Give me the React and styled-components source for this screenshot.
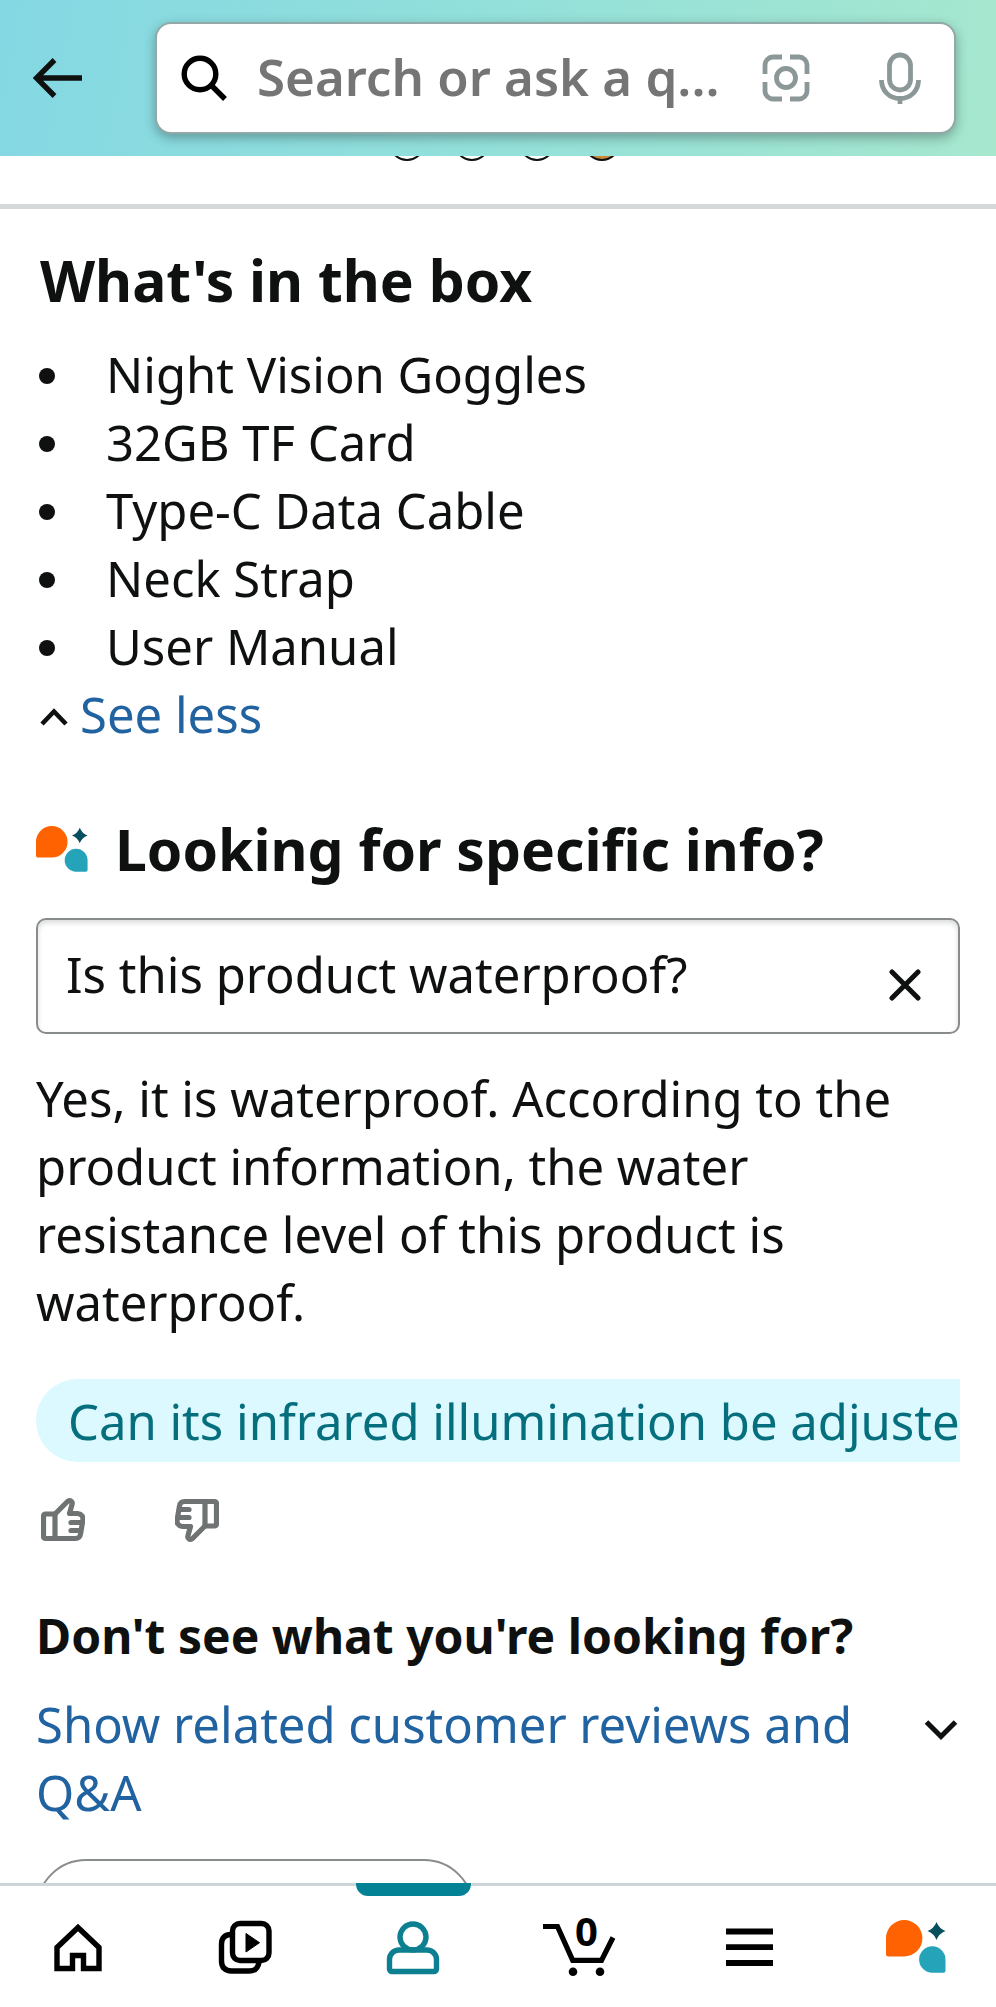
import styled, { createGlobalStyle } from "styled-components";

const boxItems = [
  "Night Vision Goggles",
  "32GB TF Card",
  "Type-C Data Cable",
  "Neck Strap",
  "User Manual",
];

const AssistantLogo = (props) => (
  <svg viewBox="7 10 60 53" aria-hidden="true" {...props}>
    <path
      d="M7 28.2a18.2 18.2 0 1 1 18.2 18.2H9.5a2.5 2.5 0 0 1-2.5-2.5z"
      fill="#ff6200"
    />
    <path
      d="M66.5 49.5a13.2 13.2 0 1 0-13.2 13.2H64.5a2 2 0 0 0 2-2z"
      fill="#25a3b9"
    />
    <path
      d="M57.5 12q2.5 6.500 9 9q-6.500 2.500-9 9q-2.500-6.500-9-9q6.500-2.500 9-9z"
      fill="#064f5f"
    />
  </svg>
);

const ThumbIcon = () => (
  <svg
    width="44"
    height="44"
    viewBox="0 0 44 44"
    fill="none"
    stroke="#6f7373"
    strokeWidth="5.2"
    strokeLinejoin="round"
    strokeLinecap="round"
    aria-hidden="true"
  >
    <path d="M14 40.500H4.500a2 2 0 0 1-2-2V18a2 2 0 0 1 2-2H14z" />
    <path d="M14 16L26.500 3.500C29 1.500 32 3.500 31 6.500L28.500 15.500H36.500C41 16 42.500 19 41.800 22.500L39.500 36C39 39.500 37.500 40.500 34.500 40.500H14" />
    <path d="M40.500 24.500H30M39.500 32.500H30" />
  </svg>
);

const App = () => {
  return (
    <Container>
      <GlobalStyle />
      <Header>
        <IconButton aria-label="Back">
          <svg width="50" height="44" viewBox="0 0 50 44" fill="none" stroke="#0f1111" strokeWidth="5.4">
            <path d="M49 22H4M21.500 4L3.500 22L21.500 40" />
          </svg>
        </IconButton>
        <SearchBar>
          <svg width="46" height="46" viewBox="0 0 46 46" fill="none" stroke="#000" strokeWidth="5.4" aria-hidden="true">
            <circle cx="19" cy="19" r="15.800" />
            <path d="M30.500 30.500L44 44" />
          </svg>
          <SearchInput
            type="text"
            aria-label="Search or ask a question"
            placeholder="Search or ask a q..."
          />
          <IconButton aria-label="Search by image">
            <svg width="48" height="48" viewBox="0 0 48 48" fill="none" stroke="#8c9898" strokeWidth="4.8">
              <path d="M3 20V11a8 8 0 0 1 8-8H20M28 3H37a8 8 0 0 1 8 8V20M45 28V37a8 8 0 0 1-8 8H28M20 45H11a8 8 0 0 1-8-8V28" />
              <circle cx="24" cy="24" r="9.500" />
            </svg>
          </IconButton>
          <IconButton aria-label="Search by voice">
            <svg width="44" height="52" viewBox="0 0 44 52" fill="none" stroke="#8c9898" strokeWidth="4.8">
              <rect x="11.500" y="3" width="21" height="35" rx="10.500" />
              <path d="M3.500 28C3.500 39 11.500 46.500 22 46.500S40.500 39 40.500 28M22 46V52" />
            </svg>
          </IconButton>
        </SearchBar>
      </Header>

      <Main>
        <Swatches>
          <Swatch />
          <Swatch />
          <Swatch />
          <Swatch $color="#cd873a" />
        </Swatches>

        <Content>
          <BoxTitle>What's in the box</BoxTitle>
          <ItemList>
            {boxItems.map((item) => (
              <li key={item}>{item}</li>
            ))}
          </ItemList>
          <SeeLess href="#less">
            <svg width="28" height="18" viewBox="0 0 28 18" fill="none" stroke="#0f1111" strokeWidth="4.6" aria-hidden="true">
              <path d="M2 16L14 3.500L26 16" />
            </svg>
            See less
          </SeeLess>

          <InfoTitle>
            <AssistantLogo width="52" height="46" />
            Looking for specific info?
          </InfoTitle>
          <Question>
            <QuestionInput
              type="text"
              aria-label="Looking for specific info?"
              defaultValue="Is this product waterproof?"
            />
            <IconButton aria-label="Clear">
              <svg width="32" height="32" viewBox="0 0 32 32" fill="none" stroke="#0f1111" strokeWidth="5" strokeLinecap="round">
                <path d="M3 3L29 29M29 3L3 29" />
              </svg>
            </IconButton>
          </Question>
          <Answer>
            Yes, it is waterproof. According to the product information, the
            water resistance level of this product is waterproof.
          </Answer>
          <Suggestions>
            <Suggestion>Can its infrared illumination be adjusted?</Suggestion>
          </Suggestions>
          <Feedback>
            <IconButton aria-label="Helpful">
              <ThumbIcon />
            </IconButton>
            <IconButton aria-label="Not helpful" $flip>
              <ThumbIcon />
            </IconButton>
          </Feedback>

          <SubTitle>Don't see what you're looking for?</SubTitle>
          <Related href="#reviews">
            <span>Show related customer reviews and Q&amp;A</span>
            <svg width="34" height="22" viewBox="0 0 34 22" fill="none" stroke="#0f1111" strokeWidth="5" aria-hidden="true">
              <path d="M2.500 3L17 17.500L31.500 3" />
            </svg>
          </Related>
          <Pill aria-label="More" />
        </Content>
      </Main>

      <Nav>
        <NavItem href="#home" aria-label="Home">
          <svg width="72" height="72" viewBox="0 0 72 72" fill="none" stroke="#000" strokeWidth="5.4">
            <path d="M15 57.500V36.500L36 16.500L57 36.500V57.500H41.500V44.500H30.500V57.500Z" />
          </svg>
        </NavItem>
        <NavItem href="#inspire" aria-label="Videos">
          <svg width="72" height="72" viewBox="0 0 72 72" fill="none" stroke="#000" strokeWidth="5.4">
            <rect x="23.500" y="12.500" width="36.500" height="37" rx="7.500" />
            <path d="M22 23.500C16 23.500 12.500 27 12.500 33V50C12.500 56.500 16 60 22.500 60H40C46 60 49 57.500 50 51" />
            <path d="M37 22.500V41L50.500 31.700Z" fill="#000" stroke="#000" strokeWidth="1" strokeLinejoin="round" />
          </svg>
        </NavItem>
        <NavItem href="#account" aria-label="Account" $active>
          <svg width="72" height="72" viewBox="0 0 72 72" fill="none" stroke="#0c8091" strokeWidth="5.4">
            <circle cx="36" cy="26" r="13" />
            <path d="M22 39H50A9.500 9.500 0 0 1 59.500 48.500V58A2.500 2.500 0 0 1 57 60.500H15A2.500 2.500 0 0 1 12.500 58V48.500A9.500 9.500 0 0 1 22 39Z" />
          </svg>
        </NavItem>
        <NavItem href="#cart" aria-label="Cart">
          <svg width="76" height="72" viewBox="-4 0 76 72" fill="none" stroke="#000" strokeWidth="5.2">
            <path d="M-4 15.500H10.500L25.700 49.300H54.500L66 26.500" />
            <circle cx="26" cy="60.700" r="4.300" fill="#000" stroke="none" />
            <circle cx="53" cy="60.700" r="4.300" fill="#000" stroke="none" />
          </svg>
          <CartCount>0</CartCount>
        </NavItem>
        <NavItem href="#menu" aria-label="Menu">
          <svg width="72" height="72" viewBox="0 0 72 72" fill="none" stroke="#000" strokeWidth="5.800">
            <path d="M13 20.500H60M13 36.200H60M13 52H60" />
          </svg>
        </NavItem>
        <NavItem href="#assistant" aria-label="Assistant">
          <AssistantLogo width="60" height="53" />
        </NavItem>
      </Nav>
    </Container>
  );
};

const GlobalStyle = createGlobalStyle`
  * {
    box-sizing: border-box;
  }
  body {
    margin: 0;
    background-color: #fff;
    color: #0f1111;
    font-family: "Noto Sans", "Open Sans", sans-serif;
    font-size: 49px;
    line-height: 68px;
  }
  svg {
    display: block;
    flex-shrink: 0;
  }
`;

const Container = styled.div`
  height: 100vh;
  display: flex;
  flex-direction: column;
`;

const Header = styled.header`
  display: flex;
  align-items: center;
  gap: 72px;
  padding: 22px 40px 22px 33px;
  background: linear-gradient(100deg, #84d8e3, #93e0da 50%, #a6e7ce);
`;

const IconButton = styled.button`
  border: none;
  background: none;
  padding: 0;
  cursor: pointer;
  transform: ${(props) => (props.$flip ? "rotate(180deg)" : "none")};
`;

const SearchBar = styled.div`
  flex: 1;
  min-width: 0;
  height: 112px;
  display: flex;
  align-items: center;
  padding: 0 32px 0 24px;
  background-color: #fff;
  border: 2px solid #93a8a8;
  border-radius: 16px;
  box-shadow: 0 4px 12px rgb(0 0 0 / 30%);

  button:last-child {
    margin-left: 68px;
  }
`;

const SearchInput = styled.input`
  flex: 1;
  min-width: 0;
  margin-left: 30px;
  padding: 0 0 4px;
  border: none;
  outline: none;
  background: none;
  font-family: inherit;
  font-size: 51px;
  font-weight: 600;
  text-overflow: ellipsis;

  &::placeholder {
    color: #757575;
    opacity: 1;
  }
`;

const Main = styled.main`
  flex: 1;
  min-height: 0;
  overflow-y: auto;
  scrollbar-width: none;
`;

const Swatches = styled.div`
  height: 53px;
  overflow: hidden;
  display: flex;
  justify-content: center;
  gap: 29px;
  padding-left: 13px;
  border-bottom: 5px solid #d5d9d9;
`;

// Only the lower edge shows below the header
const Swatch = styled.span`
  width: 36px;
  height: 36px;
  margin-top: -31px;
  border: 2px solid #0f1111;
  border-radius: 50%;
  background-color: ${(props) => props.$color || "#fff"};
`;

const Content = styled.div`
  padding: 33px 36px 0;
`;

const Title = styled.h2`
  margin: 0;
  font-size: 57px;
  font-weight: 700;
  line-height: 76px;
`;

const BoxTitle = styled(Title)`
  padding-left: 4px;
`;

const ItemList = styled.ul`
  margin: 22px 0 0;
  padding: 0;
  list-style: none;

  li {
    display: flex;
    align-items: center;
    gap: 51px;
    padding-left: 3px;
  }
  li::before {
    content: "";
    width: 16px;
    height: 16px;
    margin-top: 4px;
    border-radius: 50%;
    background-color: #0f1111;
  }
`;

const SeeLess = styled.a`
  display: flex;
  align-items: center;
  gap: 12px;
  padding-left: 4px;
  color: #2162a1;
  text-decoration: none;

  svg {
    margin-top: 6px;
  }
`;

const InfoTitle = styled(Title)`
  display: flex;
  align-items: center;
  gap: 27px;
  margin-top: 63px;
`;

const Question = styled.div`
  display: flex;
  align-items: center;
  height: 116px;
  margin-top: 31px;
  padding: 0 37px 0 28px;
  border: 2px solid #888c8c;
  border-radius: 10px;
  box-shadow: inset 0 3px 5px rgb(15 17 17 / 15%);

  button {
    padding-top: 18px;
  }
`;

const QuestionInput = styled.input`
  flex: 1;
  min-width: 0;
  padding: 0 0 4px;
  border: none;
  outline: none;
  background: none;
  color: inherit;
  font: inherit;
`;

const Answer = styled.p`
  margin: 30px 0 0;
  padding-right: 60px;
`;

const Suggestions = styled.div`
  margin-top: 43px;
  overflow: hidden;
`;

const Suggestion = styled.button`
  display: block;
  height: 83px;
  padding: 0 32px;
  border: none;
  border-radius: 42px;
  background-color: #dcf9ff;
  color: #066f7e;
  font: inherit;
  white-space: nowrap;
`;

const Feedback = styled.div`
  display: flex;
  gap: 90px;
  margin-top: 36px;
  padding-left: 5px;
`;

const SubTitle = styled.h3`
  margin: 60px 0 20px;
  font-size: 48px;
  font-weight: 700;
  line-height: 68px;
`;

const Related = styled.a`
  display: flex;
  justify-content: space-between;
  align-items: flex-start;
  color: #2162a1;
  text-decoration: none;

  span {
    flex: 1;
    padding-right: 60px;
  }
  svg {
    margin: 29px 2px 0 0;
  }
`;

const Pill = styled.button`
  display: block;
  width: 438px;
  height: 100px;
  margin-top: 33px;
  border: 2px solid #888c8c;
  border-radius: 50px;
  background-color: #fff;
`;

const Nav = styled.nav`
  height: 124px;
  display: flex;
  justify-content: space-between;
  padding: 0 22px 0 20px;
  background-color: #fff;
  border-top: 3px solid #cdd5d6;
`;

const NavItem = styled.a`
  position: relative;
  width: 115px;
  display: flex;
  align-items: center;
  justify-content: center;

  &::before {
    content: "";
    display: ${(props) => (props.$active ? "block" : "none")};
    position: absolute;
    top: -3px;
    left: 0;
    right: 0;
    height: 13px;
    border-radius: 0 0 12px 12px;
    background-color: #038296;
  }
`;

const CartCount = styled.span`
  position: absolute;
  top: 20px;
  left: 50px;
  width: 26px;
  text-align: center;
  color: #000;
  font-size: 40px;
  font-weight: 700;
  line-height: 50px;
`;

export default App;
